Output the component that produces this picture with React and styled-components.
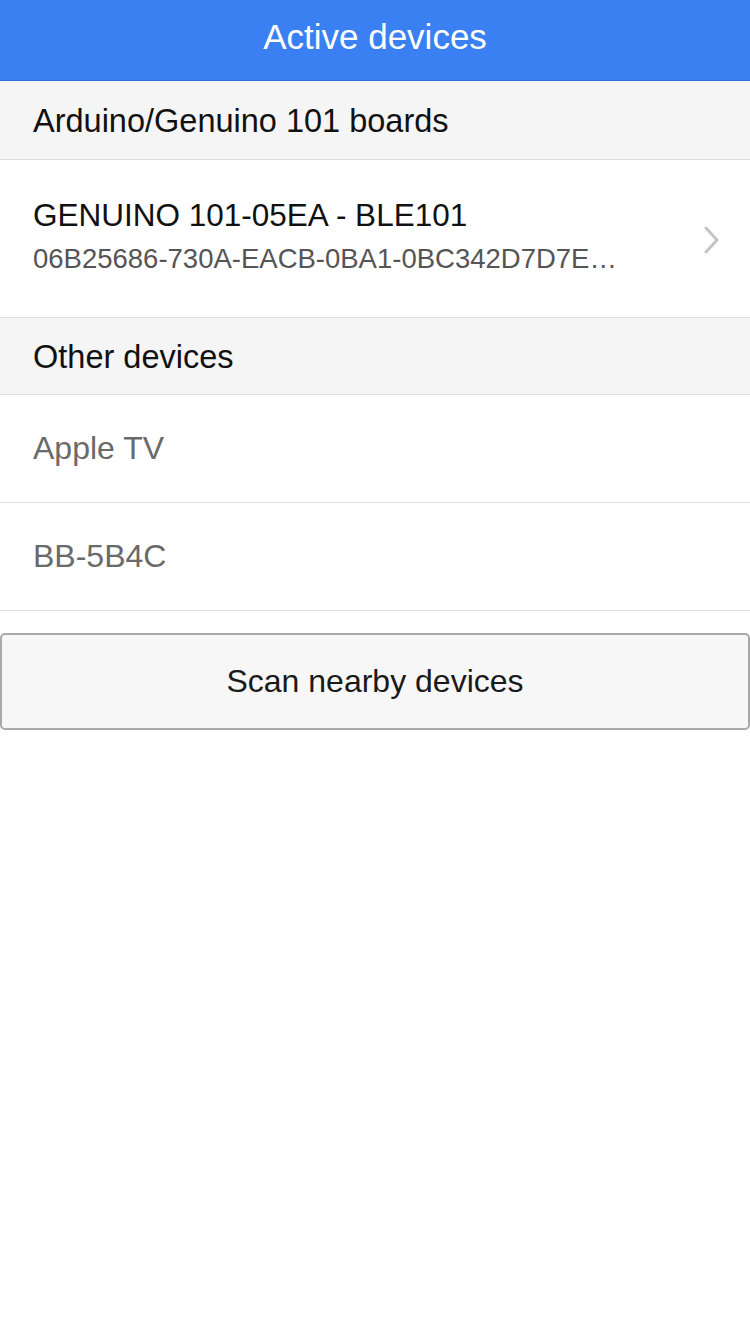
import React from "react"
import styled, { createGlobalStyle } from "styled-components"

const GlobalStyle = createGlobalStyle`
  html, body {
    margin: 0;
    padding: 0;
    background: #ffffff;
    font-family: "Liberation Sans", Arial, sans-serif;
  }
`

const boards = [
  {
    name: "GENUINO 101-05EA - BLE101",
    uuid: "06B25686-730A-EACB-0BA1-0BC342D7D7E…",
  },
]

const others = ["Apple TV", "BB-5B4C"]

export default function App() {
  return (
    <>
      <GlobalStyle />
      <Page>
        <TopBar>Active devices</TopBar>
        <SectionHeader>Arduino/Genuino 101 boards</SectionHeader>
        {boards.map((b) => (
          <BoardRow key={b.uuid}>
            <div className="info">
              <span className="name">{b.name}</span>
              <span className="uuid">{b.uuid}</span>
            </div>
            <Chevron viewBox="0 0 16 28">
              <path d="M2 2 L13 14 L2 26" />
            </Chevron>
          </BoardRow>
        ))}
        <SectionHeader $height={74}>Other devices</SectionHeader>
        {others.map((name) => (
          <OtherRow key={name}>{name}</OtherRow>
        ))}
        <ScanButton>Scan nearby devices</ScanButton>
      </Page>
    </>
  )
}

const Page = styled.div`
  width: 750px;
  min-height: 1334px;
  display: flex;
  flex-direction: column;
  background: #ffffff;
`

const TopBar = styled.header`
  height: 81px;
  box-sizing: border-box;
  background: #3a80f2;
  border-bottom: 1px solid #2f6fd8;
  color: #ffffff;
  font-size: 35px;
  display: flex;
  align-items: center;
  justify-content: center;
  padding-bottom: 6px;
`

const SectionHeader = styled.div`
  height: ${(p) => p.$height || 76}px;
  box-sizing: content-box;
  background: #f5f5f5;
  border-bottom: 1px solid #dedede;
  display: flex;
  align-items: center;
  padding: 2px 33px 0;
  font-size: 32.5px;
  color: #111111;
`

const BoardRow = styled.div`
  height: 157px;
  border-bottom: 1px solid #dedede;
  display: flex;
  align-items: center;
  justify-content: space-between;
  padding: 0 30px 0 33px;

  .info {
    display: flex;
    flex-direction: column;
    gap: 10px;
    min-width: 0;
    margin-top: -6px;
  }

  .name {
    font-size: 31.5px;
    line-height: 36px;
    color: #111111;
  }

  .uuid {
    font-size: 27.5px;
    line-height: 32px;
    color: #555555;
    white-space: nowrap;
  }
`

const Chevron = styled.svg`
  width: 16px;
  height: 28px;
  margin-top: 2px;
  fill: none;
  stroke: #c4c4c4;
  stroke-width: 3;
  stroke-linecap: round;
  stroke-linejoin: round;
`

const OtherRow = styled.div`
  height: 107px;
  border-bottom: 1px solid #dedede;
  display: flex;
  align-items: center;
  padding: 0 33px;
  font-size: 32px;
  color: #6a6a6a;
`

const ScanButton = styled.button`
  margin: 22px 0 0 0;
  width: 750px;
  height: 97px;
  box-sizing: border-box;
  background: #f7f7f7;
  border: 2px solid #a9a9a9;
  border-radius: 5px;
  font-family: "Liberation Sans", Arial, sans-serif;
  font-size: 32px;
  color: #1a1a1a;
  cursor: pointer;
`
